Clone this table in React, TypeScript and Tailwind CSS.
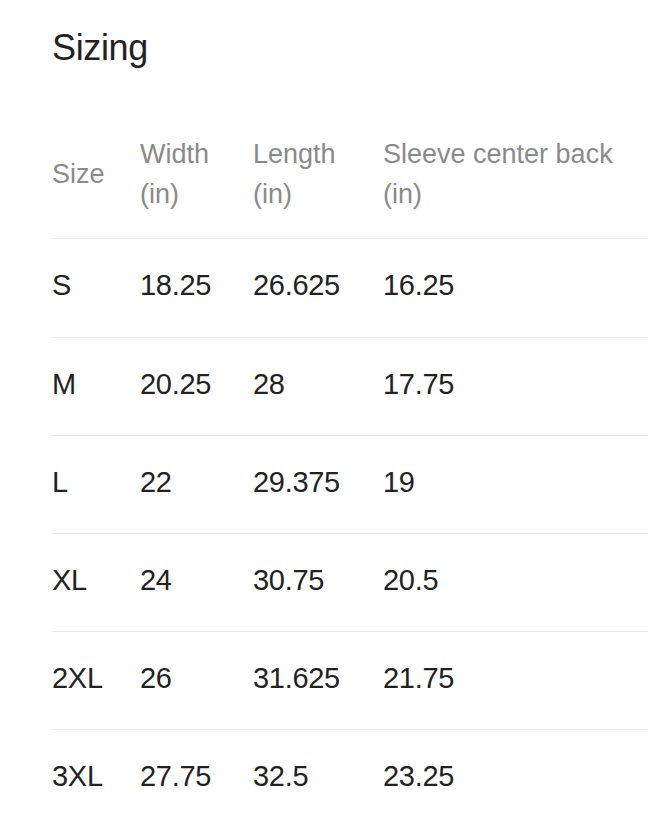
const rows = [
  ['S', '18.25', '26.625', '16.25'],
  ['M', '20.25', '28', '17.75'],
  ['L', '22', '29.375', '19'],
  ['XL', '24', '30.75', '20.5'],
  ['2XL', '26', '31.625', '21.75'],
  ['3XL', '27.75', '32.5', '23.25'],
];

const cols = 'grid grid-cols-[88px_113px_130px_1fr]';

export default function App() {
  return (
    <div className="min-h-screen bg-white pl-[52px] pt-[26px] font-['Liberation_Sans',Arial,sans-serif] text-[#222]">
      <h2 className="text-[36px] leading-[43px] font-normal tracking-[-0.01em]">Sizing</h2>

      <div className="mt-[41px]">
        {/* Header */}
        <div className={`${cols} items-center border-b border-[#ebebeb] pt-[24px] pb-[24px] text-[27px] leading-[40px] text-[#8a8a8a]`}>
          <div>Size</div>
          <div>Width<br />(in)</div>
          <div>Length<br />(in)</div>
          <div className="whitespace-nowrap">Sleeve center back<br />(in)</div>
        </div>

        {/* Rows */}
        {rows.map((r, i) => (
          <div
            key={r[0]}
            className={`${cols} h-[98px] pt-[29px] text-[29px] leading-[35px] tracking-[-0.01em] ${i > 0 ? 'border-t border-[#ebebeb]' : ''}`}
          >
            {r.map((c, j) => (
              <div key={j}>{c}</div>
            ))}
          </div>
        ))}
      </div>
    </div>
  );
}
